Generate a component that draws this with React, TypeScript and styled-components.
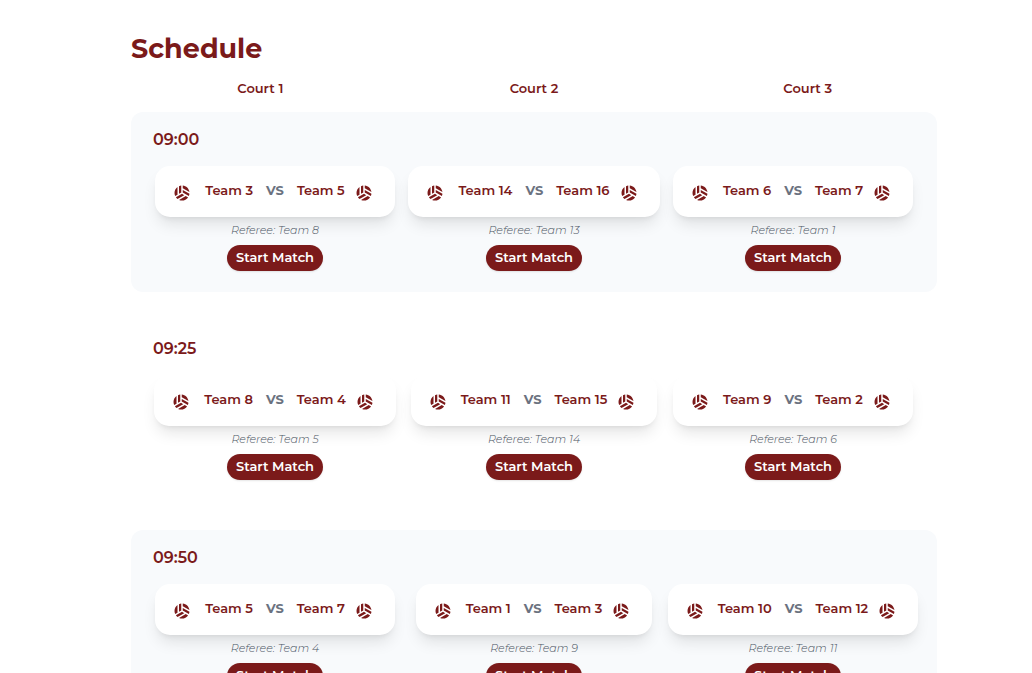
import React from "react";
import styled, { createGlobalStyle } from "styled-components";
import { MdSportsVolleyball } from "react-icons/md";

const maroon = "#7b1a1a";

const GlobalStyle = createGlobalStyle`
  *, *::before, *::after { box-sizing: border-box; }
  body {
    margin: 0;
    background: #ffffff;
    color: ${maroon};
    font-family: Montserrat, Inter, sans-serif;
  }
`;

const Page = styled.main`
  padding: 31px 95px 30px 131px;
`;

const Title = styled.h1`
  margin: 0;
  font-size: 27px;
  line-height: 36px;
  font-weight: 700;
`;

const CourtRow = styled.div`
  display: grid;
  grid-template-columns: repeat(3, minmax(0, 1fr));
  gap: 15px;
  padding: 11px 0 13px;
`;

const Court = styled.h2`
  margin: 0;
  text-align: center;
  font-size: 13px;
  line-height: 21px;
  font-weight: 600;
`;

const Slots = styled.div`
  display: flex;
  flex-direction: column;
  gap: 29px;
`;

const Slot = styled.section<{ $shaded: boolean }>`
  padding: 16px 22px 21px;
  border-radius: 12px;
  background: ${({ $shaded }) => ($shaded ? "#f8fafc" : "#ffffff")};
`;

const Time = styled.h3`
  margin: 0 0 14px;
  font-size: 16px;
  line-height: 24px;
  font-weight: 600;
`;

const Matches = styled.div`
  display: grid;
  grid-template-columns: repeat(3, minmax(0, 1fr));
  gap: 15px;
`;

const Match = styled.article`
  display: flex;
  flex-direction: column;
  align-items: center;
`;

const Card = styled.div`
  display: flex;
  align-items: center;
  width: max-content;
  height: 51px;
  padding: 0 22px 3px 18px;
  border-radius: 15px;
  background: #ffffff;
  box-shadow: 0 10px 15px -3px rgba(0, 0, 0, 0.1), 0 4px 6px -4px rgba(0, 0, 0, 0.1);
`;

const Ball = styled(MdSportsVolleyball)`
  display: block;
  width: 18px;
  height: 18px;
  margin-top: 6px;
`;

const Teams = styled.div`
  display: flex;
  align-items: center;
  gap: 13px;
  padding: 0 10px 0 14px;
  font-size: 13px;
  line-height: 20px;
  font-weight: 600;
`;

const Versus = styled.span`
  color: #6b7280;
  font-weight: 700;
`;

const Referee = styled.p`
  margin: 4px 0 6px;
  color: #4b5563;
  font-size: 11px;
  line-height: 18px;
  font-style: italic;
  font-weight: 300;
`;

const StartButton = styled.button`
  height: 26px;
  padding: 0 9px 2px;
  border: 0;
  border-radius: 13px;
  background: ${maroon};
  color: #ffffff;
  font-family: inherit;
  font-size: 13px;
  line-height: 20px;
  font-weight: 600;
  box-shadow: 0 1px 2px rgba(0, 0, 0, 0.1);
  cursor: pointer;
`;

type Game = { home: number; away: number; referee: number };

const schedule: { time: string; games: Game[] }[] = [
  {
    time: "09:00",
    games: [
      { home: 3, away: 5, referee: 8 },
      { home: 14, away: 16, referee: 13 },
      { home: 6, away: 7, referee: 1 },
    ],
  },
  {
    time: "09:25",
    games: [
      { home: 8, away: 4, referee: 5 },
      { home: 11, away: 15, referee: 14 },
      { home: 9, away: 2, referee: 6 },
    ],
  },
  {
    time: "09:50",
    games: [
      { home: 5, away: 7, referee: 4 },
      { home: 1, away: 3, referee: 9 },
      { home: 10, away: 12, referee: 11 },
    ],
  },
];

export default function App() {
  return (
    <>
      <GlobalStyle />
      <Page>
        <Title>Schedule</Title>
        <CourtRow>
          {[1, 2, 3].map((court) => (
            <Court key={court}>Court {court}</Court>
          ))}
        </CourtRow>
        <Slots>
          {schedule.map(({ time, games }, index) => (
            <Slot key={time} $shaded={index % 2 === 0}>
              <Time>{time}</Time>
              <Matches>
                {games.map(({ home, away, referee }) => (
                  <Match key={home}>
                    <Card>
                      <Ball aria-hidden />
                      <Teams>
                        <span>Team {home}</span>
                        <Versus>VS</Versus>
                        <span>Team {away}</span>
                      </Teams>
                      <Ball aria-hidden />
                    </Card>
                    <Referee>Referee: Team {referee}</Referee>
                    <StartButton type="button">Start Match</StartButton>
                  </Match>
                ))}
              </Matches>
            </Slot>
          ))}
        </Slots>
      </Page>
    </>
  );
}
